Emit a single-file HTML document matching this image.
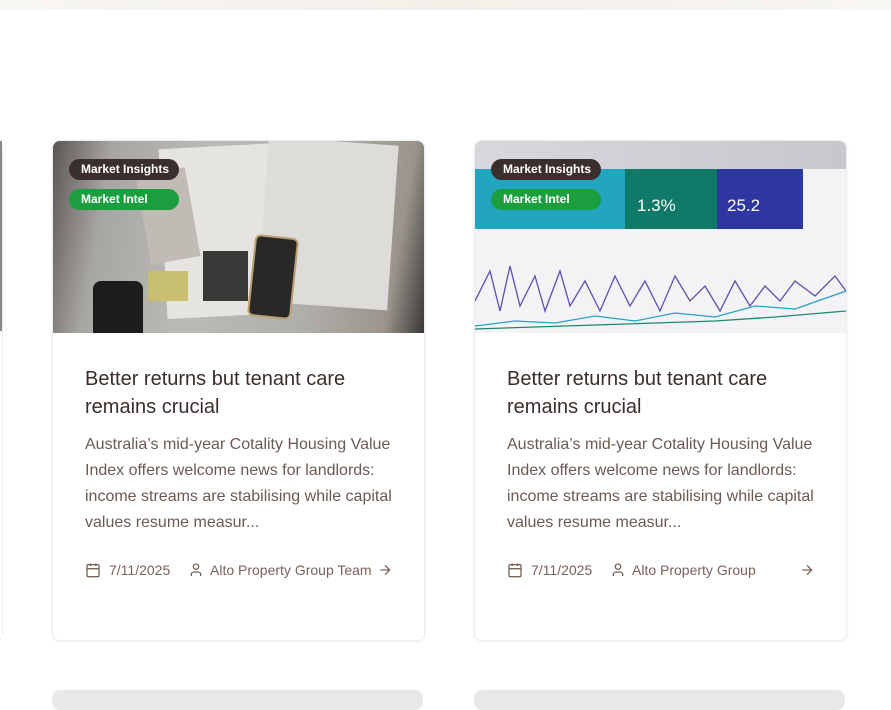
<!DOCTYPE html>
<html><head><style>
body{margin:0;width:891px;height:700px;overflow:hidden;background:#fff;font-family:"Liberation Sans",sans-serif;position:relative}
.top{position:absolute;left:0;top:0;width:891px;height:10px;background:linear-gradient(90deg,#f8f6f3,#f3efe9 50%,#f8f6f3)}
.card{position:absolute;top:140px;width:371px;height:499px;border:1px solid #ececec;border-radius:8px;box-shadow:0 1px 3px rgba(0,0,0,.06);overflow:hidden;background:#fff}
.img{position:absolute;left:0;top:0;width:100%;height:192px;overflow:hidden}
.tag{position:absolute;left:16px;height:21px;border-radius:11px;color:#fff;font-weight:bold;font-size:12px;line-height:21px;padding-left:12px;box-sizing:border-box;width:110px}
.t1{top:18px;background:#3a2f2c}
.t2{top:48px;background:#1a9e3e}
h3{position:absolute;left:32px;top:224px;margin:0;font-weight:normal;font-size:20px;line-height:28px;color:#3a2e2a;width:310px}
p{position:absolute;left:32px;top:291px;margin:0;font-size:16px;line-height:26px;color:#6b5a52;width:320px}
.meta{position:absolute;left:32px;top:421px;font-size:14px;color:#7a6258;width:310px;height:18px}
.meta span{position:absolute;top:0}
svg{position:absolute}
.bot{position:absolute;top:690px;width:371px;height:20px;background:#e8e8e8;border-radius:8px}
.pp{position:absolute;background:#e6e4e0}
</style></head><body>
<div class="top"></div>
<div style="position:absolute;left:-20px;top:140px;width:21px;height:499px;border:1px solid #ececec;border-radius:8px"></div>
<div style="position:absolute;left:0;top:141px;width:2px;height:190px;background:#888"></div>

<div class="card" style="left:52px">
 <div class="img" style="background:linear-gradient(100deg,#5a5654 0%,#a8a6a2 15%,#bcbab6 40%,#b0aeaa 70%,#9a948c 90%,#3a3836 100%)">
  <div class="pp" style="left:110px;top:5px;width:120px;height:170px;transform:rotate(-3deg)"></div>
  <div class="pp" style="left:210px;top:0;width:130px;height:165px;transform:rotate(4deg);background:#dedcd8"></div>
  <div style="position:absolute;left:150px;top:110px;width:45px;height:50px;background:#3a3836"></div>
  <div style="position:absolute;left:198px;top:95px;width:40px;height:78px;background:#2a2826;border-radius:6px;border:2px solid #b8a070;transform:rotate(6deg)"></div>
  <div style="position:absolute;left:90px;top:30px;width:50px;height:90px;background:#c0bbb5;transform:rotate(-10deg)"></div>
  <div style="position:absolute;left:95px;top:130px;width:40px;height:30px;background:#c8c070"></div>
  <div style="position:absolute;left:40px;top:140px;width:50px;height:60px;background:#1e1c1b;border-radius:8px"></div>
 </div>
 <div class="tag t1">Market Insights</div><div class="tag t2">Market Intel</div>
 <h3>Better returns but tenant care remains crucial</h3>
 <p>Australia’s mid-year Cotality Housing Value Index offers welcome news for landlords: income streams are stabilising while capital values resume measur...</p>
 <div class="meta">
  <svg style="left:0;top:0" width="16" height="16" viewBox="0 0 24 24" fill="none" stroke="#7a6258" stroke-width="2"><rect x="3" y="4" width="18" height="18" rx="2"/><path d="M16 2v4M8 2v4M3 10h18"/></svg>
  <span style="left:24px">7/11/2025</span>
  <svg style="left:103px;top:0" width="16" height="16" viewBox="0 0 24 24" fill="none" stroke="#7a6258" stroke-width="2"><circle cx="12" cy="7" r="4"/><path d="M19 21v-2a4 4 0 0 0-4-4H9a4 4 0 0 0-4 4v2"/></svg>
  <span style="left:125px">Alto Property Group Team</span>
  <svg style="left:292px;top:0" width="16" height="16" viewBox="0 0 24 24" fill="none" stroke="#7a6258" stroke-width="2"><path d="M5 12h14M12 5l7 7-7 7"/></svg>
 </div>
</div>

<div class="card" style="left:474px">
 <div class="img" style="background:#f3f3f5">
  <div style="position:absolute;left:0;top:28px;width:150px;height:60px;background:#22a6c0"></div>
  <div style="position:absolute;left:150px;top:28px;width:92px;height:60px;background:#0f7a68"></div>
  <div style="position:absolute;left:242px;top:28px;width:86px;height:60px;background:#2e36a0"></div>
  <div style="position:absolute;left:0;top:0;width:100%;height:28px;background:linear-gradient(90deg,#d8d8dc,#c8c8cc)"></div>
  <span style="position:absolute;left:162px;top:55px;color:#fff;font-size:17px">1.3%</span>
  <span style="position:absolute;left:252px;top:55px;color:#fff;font-size:17px">25.2</span>
  <svg style="left:0;top:110px" width="371" height="82" viewBox="0 0 371 82" fill="none" stroke-width="1.3"><path d="M0 50 L15 20 25 60 35 15 45 55 60 25 70 60 85 20 95 55 110 30 125 60 140 25 155 55 170 30 185 60 200 25 215 50 230 35 245 60 260 30 275 55 290 35 305 50 320 30 340 45 360 25 371 40" stroke="#5a4fb0"/><path d="M0 75 L40 70 80 72 120 65 160 70 200 62 240 66 280 55 320 58 371 40" stroke="#28a0c8"/><path d="M0 78 L60 76 120 74 180 72 240 70 300 66 371 60" stroke="#1a8a70"/></svg>
 </div>
 <div class="tag t1">Market Insights</div><div class="tag t2">Market Intel</div>
 <h3>Better returns but tenant care remains crucial</h3>
 <p>Australia’s mid-year Cotality Housing Value Index offers welcome news for landlords: income streams are stabilising while capital values resume measur...</p>
 <div class="meta">
  <svg style="left:0;top:0" width="16" height="16" viewBox="0 0 24 24" fill="none" stroke="#7a6258" stroke-width="2"><rect x="3" y="4" width="18" height="18" rx="2"/><path d="M16 2v4M8 2v4M3 10h18"/></svg>
  <span style="left:24px">7/11/2025</span>
  <svg style="left:103px;top:0" width="16" height="16" viewBox="0 0 24 24" fill="none" stroke="#7a6258" stroke-width="2"><circle cx="12" cy="7" r="4"/><path d="M19 21v-2a4 4 0 0 0-4-4H9a4 4 0 0 0-4 4v2"/></svg>
  <span style="left:125px">Alto Property Group</span>
  <svg style="left:292px;top:0" width="16" height="16" viewBox="0 0 24 24" fill="none" stroke="#7a6258" stroke-width="2"><path d="M5 12h14M12 5l7 7-7 7"/></svg>
 </div>
</div>

<div class="bot" style="left:52px"></div>
<div class="bot" style="left:474px"></div>
</body></html>
